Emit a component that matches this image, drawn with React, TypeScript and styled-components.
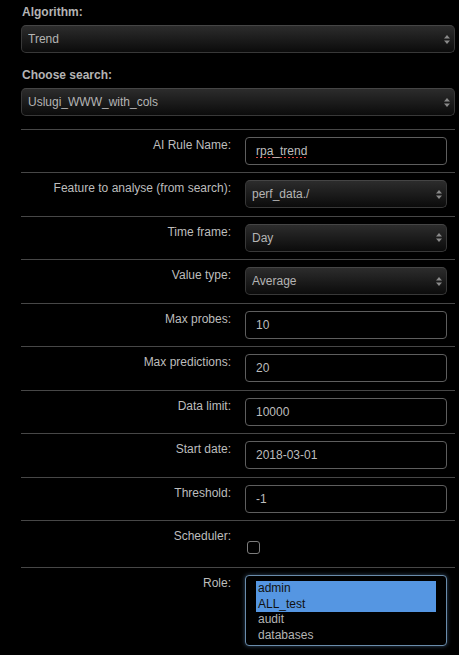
import React from "react";
import styled, { createGlobalStyle } from "styled-components";

const Global = createGlobalStyle`
  html, body {
    margin: 0;
    padding: 0;
    background: #000;
  }
  body {
    font-family: "Liberation Sans", Arial, Helvetica, sans-serif;
    font-size: 12px;
    color: #c4c4c4;
  }
`;

const Page = styled.form`
  width: 434px;
  padding: 4px 0 0 21px;
  box-sizing: content-box;
`;

const TopGroup = styled.div<{ $gap: number }>`
  display: flex;
  flex-direction: column;
  margin-bottom: ${(p) => p.$gap}px;
`;

const TopLabel = styled.label`
  font-weight: bold;
  font-size: 12px;
  line-height: 17px;
  color: #b4b4b4;
  padding-left: 1px;
  margin-bottom: 4px;
`;

const SelectWrap = styled.div`
  position: relative;
  width: 100%;
`;

const Select = styled.select`
  appearance: none;
  -webkit-appearance: none;
  width: 100%;
  height: 28px;
  box-sizing: border-box;
  margin: 0;
  padding: 0 20px 0 6px;
  font-family: inherit;
  font-size: 12px;
  color: #b4b4b4;
  border: 1px solid #383838;
  border-top-color: #454545;
  border-radius: 5px;
  background: linear-gradient(to bottom, #2c2c2c 0%, #1a1a1a 55%, #0b0b0b 100%);
  box-shadow: 0 1px 1px rgba(0, 0, 0, 0.6);
  outline: none;
`;

const ArrowIcon = styled.svg`
  position: absolute;
  right: 5px;
  top: 50%;
  width: 6px;
  height: 9px;
  margin-top: -4.5px;
  pointer-events: none;
`;

const Arrows = () => (
  <ArrowIcon viewBox="0 0 6 9">
    <path d="M3 0 L6 3.6 L0 3.6 Z" fill="#8a8a8a" />
    <path d="M0 5.4 L6 5.4 L3 9 Z" fill="#8a8a8a" />
  </ArrowIcon>
);

const Rows = styled.div`
  display: flex;
  flex-direction: column;
`;

const Row = styled.div`
  display: grid;
  grid-template-columns: 210px 202px;
  column-gap: 14px;
  border-top: 1px solid #474747;
  padding: 7px 8px 7.45px 0;
`;

const RowLabel = styled.label`
  text-align: right;
  font-size: 12px;
  line-height: 17px;
  color: #bdbdbd;
`;

const Control = styled.div`
  display: flex;
  flex-direction: column;
`;

const TextInput = styled.input<{ $spell?: boolean }>`
  width: 100%;
  height: 28px;
  box-sizing: border-box;
  margin: 0;
  padding: 0 10px;
  font-family: inherit;
  font-size: 12px;
  color: #bdbdbd;
  background: #000;
  border: 1px solid #5e5e5e;
  border-radius: 4px;
  outline: none;
  text-decoration: ${(p) => (p.$spell ? "underline dotted #e0443a" : "none")};
  text-underline-offset: 2px;
  text-decoration-thickness: 2px;
`;

const CheckCell = styled.div`
  height: 32px;
  padding-top: 13px;
  box-sizing: border-box;
`;

const Check = styled.input`
  appearance: none;
  -webkit-appearance: none;
  display: block;
  width: 13px;
  height: 13px;
  margin: 0 0 0 2px;
  box-sizing: border-box;
  border: 1.5px solid #7d7d7d;
  border-radius: 3px;
  background: #000;
`;

const ListBox = styled.select`
  width: 100%;
  height: 71px;
  box-sizing: border-box;
  margin: 0;
  padding: 5px 10px;
  font-family: inherit;
  font-size: 12px;
  color: #b4b4b4;
  background: #000;
  border: 1px solid #6a8cab;
  border-radius: 4px;
  box-shadow: 0 0 4px rgba(110, 160, 210, 0.45);
  outline: none;
  overflow: hidden;

  option {
    padding: 0 2px 1px;
    color: #b4b4b4;
  }
  option:checked {
    background-color: #5596e2;
    background-image: linear-gradient(#5596e2, #5596e2);
    color: #111;
  }
`;

type Field =
  | { kind: "text"; label: string; value: string; spell?: boolean }
  | { kind: "select"; label: string; value: string };

const fields: Field[] = [
  { kind: "text", label: "AI Rule Name:", value: "rpa_trend", spell: true },
  { kind: "select", label: "Feature to analyse (from search):", value: "perf_data./" },
  { kind: "select", label: "Time frame:", value: "Day" },
  { kind: "select", label: "Value type:", value: "Average" },
  { kind: "text", label: "Max probes:", value: "10" },
  { kind: "text", label: "Max predictions:", value: "20" },
  { kind: "text", label: "Data limit:", value: "10000" },
  { kind: "text", label: "Start date:", value: "2018-03-01" },
  { kind: "text", label: "Threshold:", value: "-1" },
];

export default function App() {
  return (
    <>
      <Global />
      <Page onSubmit={(e) => e.preventDefault()}>
        <TopGroup $gap={14}>
          <TopLabel>Algorithm:</TopLabel>
          <SelectWrap>
            <Select defaultValue="Trend">
              <option>Trend</option>
            </Select>
            <Arrows />
          </SelectWrap>
        </TopGroup>
        <TopGroup $gap={13}>
          <TopLabel>Choose search:</TopLabel>
          <SelectWrap>
            <Select defaultValue="Uslugi_WWW_with_cols">
              <option>Uslugi_WWW_with_cols</option>
            </Select>
            <Arrows />
          </SelectWrap>
        </TopGroup>
        <Rows>
          {fields.map((f) => (
            <Row key={f.label}>
              <RowLabel>{f.label}</RowLabel>
              <Control>
                {f.kind === "text" ? (
                  <TextInput
                    type="text"
                    defaultValue={f.value}
                    spellCheck={false}
                    $spell={f.spell}
                  />
                ) : (
                  <SelectWrap>
                    <Select defaultValue={f.value}>
                      <option>{f.value}</option>
                    </Select>
                    <Arrows />
                  </SelectWrap>
                )}
              </Control>
            </Row>
          ))}
          <Row>
            <RowLabel>Scheduler:</RowLabel>
            <CheckCell>
              <Check type="checkbox" />
            </CheckCell>
          </Row>
          <Row>
            <RowLabel>Role:</RowLabel>
            <Control>
              <ListBox multiple size={4} defaultValue={["admin", "ALL_test"]}>
                <option value="admin">admin</option>
                <option value="ALL_test">ALL_test</option>
                <option value="audit">audit</option>
                <option value="databases">databases</option>
              </ListBox>
            </Control>
          </Row>
        </Rows>
      </Page>
    </>
  );
}
